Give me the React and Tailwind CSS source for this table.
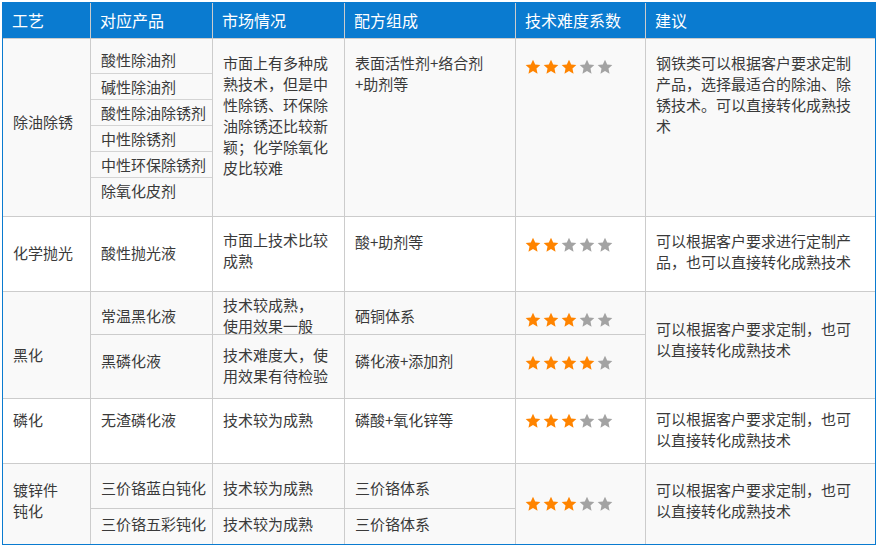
import React from "react";

const FONT = { fontFamily: '"Noto Sans CJK SC", "Noto Sans", sans-serif' };

function Star({ on }) {
  return (
    <svg width="16" height="16" viewBox="0 0 24 24">
      <polygon
        points="12,1.2 15.3,8.2 23,9.1 17.2,14.3 18.8,22 12,18.1 5.2,22 6.8,14.3 1,9.1 8.7,8.2"
        fill={on ? "#ff8400" : "#a3a3a3"}
      />
    </svg>
  );
}

function Stars({ n, pt, cls }) {
  return (
    <div className={`${cls} pl-[9px]`} style={{ paddingTop: pt }}>
      <div className="flex gap-[2px]">
        {[0, 1, 2, 3, 4].map((i) => (
          <Star key={i} on={i < n} />
        ))}
      </div>
    </div>
  );
}

function Cell({ cls, pt, lines }) {
  return (
    <div
      className={`${cls} pl-[10px] pr-[4px] text-[15px] leading-[21px] text-[#3a3a3a] whitespace-nowrap`}
      style={{ paddingTop: pt }}
    >
      {lines.map((l, i) => (
        <div key={i}>{l}</div>
      ))}
    </div>
  );
}

const G = "bg-[#f9f9f9]";
const W = "bg-white";

export default function App() {
  const products = ["酸性除油剂", "碱性除油剂", "酸性除油除锈剂", "中性除锈剂", "中性环保除锈剂", "除氧化皮剂"];
  return (
    <div className="bg-white w-[890px] h-[555px] pt-[2px] pl-[2px]" style={FONT}>
      <div className="grid w-fit grid-cols-[87px_121px_131px_170px_129px_229px] grid-rows-[35px_177px_74px_42px_63px_64px_44px_35px] gap-px bg-[#cccccc] border border-[#0a7bd0]">
        {/* header */}
        {["工艺", "对应产品", "市场情况", "配方组成", "技术难度系数", "建议"].map((h) => (
          <div key={h} className="bg-[#0a7bd0] text-white text-[16px] leading-[21px] pl-[9px] pt-[7px] whitespace-nowrap">
            {h}
          </div>
        ))}

        {/* row 1 */}
        <Cell cls={`${G} col-start-1 row-start-2`} pt={72} lines={["除油除锈"]} />
        <div className={`${G} col-start-2 row-start-2 pt-[8px] text-[15px] leading-[21px] text-[#3a3a3a]`}>
          {products.map((p, i) => (
            <div
              key={p}
              className={
                i === 0
                  ? "h-[26px] pt-[2px] pl-[10px] whitespace-nowrap"
                  : "h-[26px] pt-[2px] pl-[10px] border-t border-[#d4d4d4] whitespace-nowrap"
              }
            >
              {p}
            </div>
          ))}
        </div>
        <Cell
          cls={`${G} col-start-3 row-start-2`}
          pt={13}
          lines={["市面上有多种成", "熟技术，但是中", "性除锈、环保除", "油除锈还比较新", "颖；化学除氧化", "皮比较难"]}
        />
        <Cell cls={`${G} col-start-4 row-start-2`} pt={13} lines={["表面活性剂+络合剂", "+助剂等"]} />
        <Stars cls={`${G} col-start-5 row-start-2`} pt={20} n={3} />
        <Cell
          cls={`${G} col-start-6 row-start-2`}
          pt={13}
          lines={["钢铁类可以根据客户要求定制", "产品，选择最适合的除油、除", "锈技术。可以直接转化成熟技", "术"]}
        />

        {/* row 2 */}
        <Cell cls={`${W} col-start-1 row-start-3`} pt={25} lines={["化学抛光"]} />
        <Cell cls={`${W} col-start-2 row-start-3`} pt={25} lines={["酸性抛光液"]} />
        <Cell cls={`${W} col-start-3 row-start-3`} pt={12} lines={["市面上技术比较", "成熟"]} />
        <Cell cls={`${W} col-start-4 row-start-3`} pt={14} lines={["酸+助剂等"]} />
        <Stars cls={`${W} col-start-5 row-start-3`} pt={20} n={2} />
        <Cell
          cls={`${W} col-start-6 row-start-3`}
          pt={13}
          lines={["可以根据客户要求进行定制产", "品，也可以直接转化成熟技术"]}
        />

        {/* row 3 */}
        <Cell cls={`${G} col-start-1 row-start-4 row-span-2`} pt={52} lines={["黑化"]} />
        <Cell cls={`${G} col-start-2 row-start-4`} pt={13} lines={["常温黑化液"]} />
        <Cell cls={`${G} col-start-3 row-start-4`} pt={2} lines={["技术较成熟，", "使用效果一般"]} />
        <Cell cls={`${G} col-start-4 row-start-4`} pt={13} lines={["硒铜体系"]} />
        <Stars cls={`${G} col-start-5 row-start-4`} pt={20} n={3} />
        <Cell
          cls={`${G} col-start-6 row-start-4 row-span-2`}
          pt={26}
          lines={["可以根据客户要求定制，也可", "以直接转化成熟技术"]}
        />
        <Cell cls={`${G} col-start-2 row-start-5`} pt={15} lines={["黑磷化液"]} />
        <Cell cls={`${G} col-start-3 row-start-5`} pt={9} lines={["技术难度大，使", "用效果有待检验"]} />
        <Cell cls={`${G} col-start-4 row-start-5`} pt={15} lines={["磷化液+添加剂"]} />
        <Stars cls={`${G} col-start-5 row-start-5`} pt={20} n={4} />

        {/* row 4 */}
        <Cell cls={`${W} col-start-1 row-start-6`} pt={10} lines={["磷化"]} />
        <Cell cls={`${W} col-start-2 row-start-6`} pt={10} lines={["无渣磷化液"]} />
        <Cell cls={`${W} col-start-3 row-start-6`} pt={10} lines={["技术较为成熟"]} />
        <Cell cls={`${W} col-start-4 row-start-6`} pt={10} lines={["磷酸+氧化锌等"]} />
        <Stars cls={`${W} col-start-5 row-start-6`} pt={14} n={3} />
        <Cell
          cls={`${W} col-start-6 row-start-6`}
          pt={9}
          lines={["可以根据客户要求定制，也可", "以直接转化成熟技术"]}
        />

        {/* row 5 */}
        <Cell cls={`${G} col-start-1 row-start-7 row-span-2`} pt={15} lines={["镀锌件", "钝化"]} />
        <Cell cls={`${G} col-start-2 row-start-7`} pt={13} lines={["三价铬蓝白钝化"]} />
        <Cell cls={`${G} col-start-3 row-start-7`} pt={13} lines={["技术较为成熟"]} />
        <Cell cls={`${G} col-start-4 row-start-7`} pt={13} lines={["三价铬体系"]} />
        <Stars cls={`${G} col-start-5 row-start-7 row-span-2`} pt={32} n={3} />
        <Cell
          cls={`${G} col-start-6 row-start-7 row-span-2`}
          pt={15}
          lines={["可以根据客户要求定制，也可", "以直接转化成熟技术"]}
        />
        <Cell cls={`${G} col-start-2 row-start-8`} pt={4} lines={["三价铬五彩钝化"]} />
        <Cell cls={`${G} col-start-3 row-start-8`} pt={4} lines={["技术较为成熟"]} />
        <Cell cls={`${G} col-start-4 row-start-8`} pt={4} lines={["三价铬体系"]} />
      </div>
    </div>
  );
}
